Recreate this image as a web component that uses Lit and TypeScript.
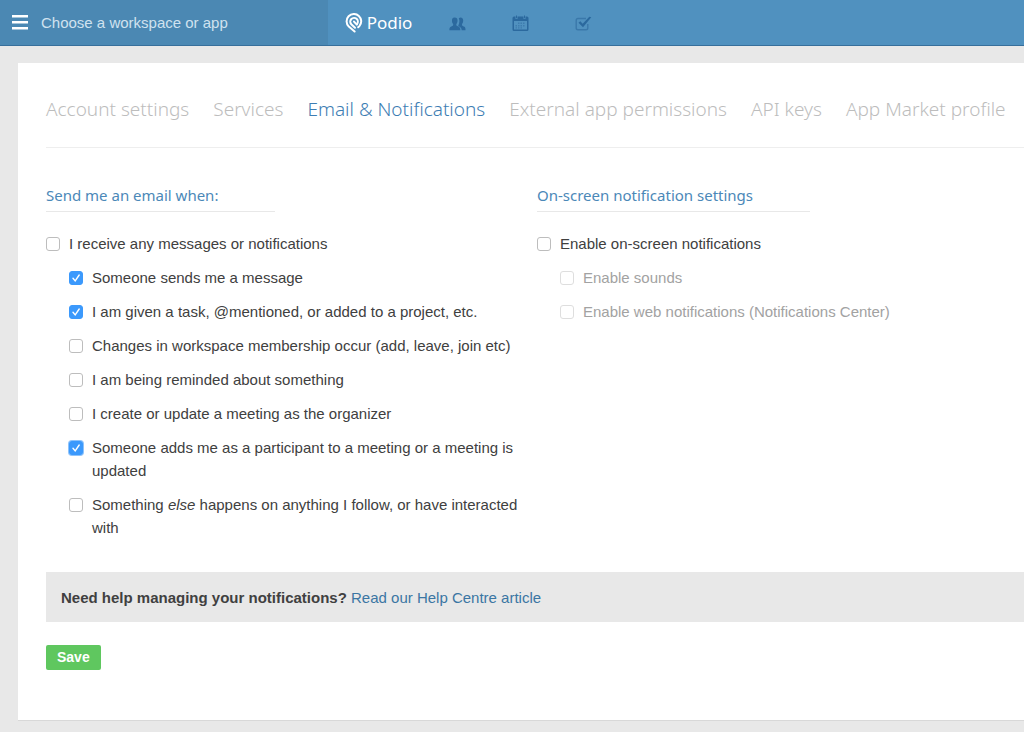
import { LitElement, html, css, svg, nothing } from "lit";
import { customElement, property } from "lit/decorators.js";

interface Option {
  label: unknown;
  checked?: boolean;
  disabled?: boolean;
  focused?: boolean;
}

const tabs = ["Account settings", "Services", "Email & Notifications", "External app permissions", "API keys", "App Market profile"];
const activeTab = "Email & Notifications";

const emailOptions: Option[] = [
  { label: "Someone sends me a message", checked: true },
  { label: "I am given a task, @mentioned, or added to a project, etc.", checked: true },
  { label: "Changes in workspace membership occur (add, leave, join etc)" },
  { label: "I am being reminded about something" },
  { label: "I create or update a meeting as the organizer" },
  { label: "Someone adds me as a participant to a meeting or a meeting is updated", checked: true, focused: true },
  { label: html`Something <em>else</em> happens on anything I follow, or have interacted with` },
];

const screenOptions: Option[] = [
  { label: "Enable sounds", disabled: true },
  { label: "Enable web notifications (Notifications Center)", disabled: true },
];

const icons = {
  menu: svg`<svg width="16" height="15" viewBox="0 0 16 15" fill="#fff"><path d="M0 0h16v2.500H0zM0 6h16v2.500H0zM0 12h16v2.500H0z"/></svg>`,
  podio: svg`<svg width="18" height="20" viewBox="0 0 18 20" fill="none" stroke="#fff" stroke-width="2" stroke-linecap="round" stroke-linejoin="round"><path d="M9.600 18.500L3.800 13.500A7.300 7.300 0 1 1 14.400 13.100L13.200 14.300"/><path d="M10 14.800L6.300 11.300A3.800 3.800 0 1 1 12 11.100"/><path d="M9 8.600L11.800 11.600"/></svg>`,
  people: svg`<svg width="17" height="14" viewBox="0 0 17 14" fill="#2b699e"><path d="M9.800 1.200C11.900-.2 14.400 1 14.200 3.800c-.1 1.900-.8 2.700-1.200 3.400 0 1.500.5 1.800 2 2.400 1.200.5 1.500 1.300 1.500 3.600h-3.800c-.2-1.900-.8-2.800-2.500-3.600-.8-.4-1-.6-.9-1.200C10.500 6.500 10.800 3.500 9.800 1.200z"/><path d="M5.500.5C8 .5 8.800 2 8.500 4.200c-.2 1.600-.7 2.300-1.200 2.900 0 1.700.4 1.900 2 2.500 1.500.6 2 1.200 2 3.600H.4c0-2.400.4-3 1.900-3.600 1.500-.6 1.900-.9 1.900-2.500-.6-.7-1.100-1.400-1.200-2.900C2.800 2 3.500.5 5.500.5z"/></svg>`,
  calendar: svg`<svg width="17" height="17" viewBox="0 0 17 17" fill="#2b699e"><path fill-rule="evenodd" d="M2 1.500h1.500V4h2V1.500h6V4h2V1.500H15q1.500 0 1.500 1.500v11.500q0 1.500-1.500 1.500H2Q.5 16 .5 14.500V3Q.5 1.500 2 1.500zM2 6v8.500h13V6z"/><path d="M4 .5h1v2.700H4zM12 .5h1v2.700h-1z"/><path opacity=".5" d="M6 7.500h1.500V9H6zM8.500 7.500H10V9H8.500zM11 7.500h1.500V9H11zM3.500 10H5v1.500H3.500zM6 10h1.500v1.500H6zM8.500 10H10v1.500H8.500zM11 10h1.500v1.500H11zM3.500 12.300H5v1.200H3.500zM6 12.300h1.500v1.200H6zM8.500 12.300H10v1.200H8.500z"/></svg>`,
  task: svg`<svg width="17" height="15" viewBox="0 0 17 15" fill="none"><path stroke="#3a78aa" stroke-width="1.400" d="M11 2.500H3Q1.200 2.500 1.200 4.300v7.700Q1.200 13.800 3 13.800h8q1.800 0 1.800-1.800V8"/><path fill="#2b699e" d="M3.500 6.800L5.300 5.200l2.400 2.600L14.300.8l2 .4L8 11.300z"/></svg>`,
};

@customElement("option-row")
export class OptionRow extends LitElement {
  @property({ attribute: false }) option: Option = { label: "" };

  static styles = css`
    :host { display: block; }
    .row { display: flex; align-items: flex-start; gap: 9px; line-height: 23px; color: #404040; }
    .disabled { color: #a2a2a2; }
    .box {
      appearance: none; flex: none; box-sizing: border-box; width: 14px; height: 14px; margin: 5px 0 0;
      border: 1px solid #bdbdbd; border-radius: 3px; background: #fff; outline: none;
    }
    .disabled .box { border-color: #dedede; }
    .box:checked {
      border-color: #3b99fc;
      background: #3b99fc url("data:image/svg+xml,%3Csvg xmlns='http://www.w3.org/2000/svg' viewBox='0 0 12 12'%3E%3Cpath d='M3 6.300l2.200 2.600L9.200 3' fill='none' stroke='white' stroke-width='1.400' stroke-linecap='round'/%3E%3C/svg%3E") center / 12px no-repeat;
    }
    .focused { box-shadow: 0 0 0 1px #8ec3fb; }
  `;

  render() {
    const o = this.option;
    return html`<label class="row ${o.disabled ? "disabled" : ""}">
      <input class="box ${o.focused ? "focused" : ""}" type="checkbox" .checked=${!!o.checked} ?disabled=${!!o.disabled} />
      <span>${o.label}</span>
    </label>`;
  }
}

@customElement("app-root")
export class AppRoot extends LitElement {
  static styles = css`
    :host { display: flow-root; min-height: 100vh; overflow-x: hidden; background: #e8e8e8; color: #404040; font: 15px/23px "Liberation Sans", Arial, sans-serif; }
    a { text-decoration: none; }
    svg { display: block; }
    .bar { display: flex; height: 45px; background: #5091bf; border-bottom: 1px solid #376f9b; }
    .switcher { display: flex; align-items: center; gap: 13px; box-sizing: border-box; width: 32%; padding: 0 12px; border: 0; background: #4b88b3; color: #d0e2ef; font: inherit; }
    .nav { display: flex; align-items: center; padding-left: 17px; }
    .brand { display: flex; align-items: center; gap: 4px; margin-right: 37px; color: #fff; font: 17px/24px "Noto Sans", sans-serif; }
    .links { display: flex; align-items: center; gap: 46px; padding-top: 2px; }
    .card { margin: 17px 0 0 18px; padding: 32px 0 50px 28px; background: #fff; border-bottom: 1px solid #d8d8d8; }
    .tabs { display: flex; gap: 24px; padding-bottom: 23px; border-bottom: 1px solid #eee; font: 300 19px/29px "Noto Sans", sans-serif; white-space: nowrap; }
    .tab { color: #bdbdbd; }
    .active { color: #3d7db3; }
    .columns { display: grid; grid-template-columns: 475px 1fr; column-gap: 16px; padding-top: 36px; }
    .group { margin: 0; min-width: 0; }
    .title { width: fit-content; margin: 0 0 20px; padding-bottom: 4px; border-bottom: 1px solid #e8e8e8; color: #4b88b8; font: 400 15px/23px "Noto Sans", sans-serif; }
    .email, .screen { padding-right: 57px; }
    .list { display: grid; gap: 11px; }
    .sub { padding-left: 23px; }
    .help { margin-top: 33px; padding: 14px 15px 13px; background: #e8e8e8; }
    .link { color: #3b76a3; }
    .save { display: block; margin-top: 23px; height: 25px; padding: 0 11px; border: 0; border-radius: 2px; background: #5fc75f; color: #fff; font: bold 14px/25px "Liberation Sans", Arial, sans-serif; }
  `;

  private group(title: string, kind: string, main: string, options: Option[]) {
    return html`<section class="group">
      <h2 class="title ${kind}">${title}</h2>
      <div class="list">
        <option-row .option=${{ label: main }}></option-row>
        ${options.map((o) => html`<option-row class="sub" .option=${o}></option-row>`)}
      </div>
    </section>`;
  }

  render() {
    return html`
      <header class="bar">
        <button class="switcher">${icons.menu}<span>Choose a workspace or app</span></button>
        <nav class="nav">
          <a class="brand" href="#">${icons.podio}<span>Podio</span></a>
          <div class="links">
            <a href="#people" aria-label="People">${icons.people}</a>
            <a href="#calendar" aria-label="Calendar">${icons.calendar}</a>
            <a href="#tasks" aria-label="Tasks">${icons.task}</a>
          </div>
        </nav>
      </header>
      <main class="card">
        <nav class="tabs">
          ${tabs.map((t) => html`<a class="tab ${t === activeTab ? "active" : ""}" href="#" aria-current=${t === activeTab ? "page" : nothing}>${t}</a>`)}
        </nav>
        <form @submit=${(e: Event) => e.preventDefault()}>
          <div class="columns">
            ${this.group("Send me an email when:", "email", "I receive any messages or notifications", emailOptions)}
            ${this.group("On-screen notification settings", "screen", "Enable on-screen notifications", screenOptions)}
          </div>
          <div class="help"><b>Need help managing your notifications?</b> <a class="link" href="#help">Read our Help Centre article</a></div>
          <button class="save">Save</button>
        </form>
      </main>
    `;
  }
}
